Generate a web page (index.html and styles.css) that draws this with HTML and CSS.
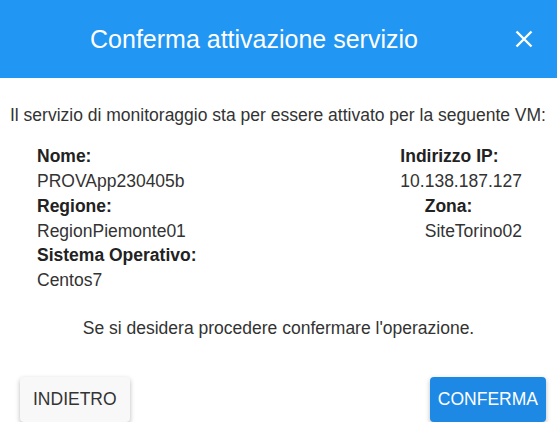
FILE: index.html
```html
<!DOCTYPE html>
<html lang="it">
<head>
<meta charset="utf-8">
<title>Conferma attivazione servizio</title>
<link rel="stylesheet" href="styles.css">
</head>
<body>
<div class="dialog">
  <div class="header">
    <h1 class="title">Conferma attivazione servizio</h1>
    <button class="close" aria-label="Chiudi">
      <svg width="18" height="18" viewBox="0 0 18 18"><path d="M1.5 1.5 L16.5 16.5 M16.5 1.5 L1.5 16.5" stroke="#fff" stroke-width="2.4" fill="none"/></svg>
    </button>
  </div>
  <div class="content">
    <p class="intro">Il servizio di monitoraggio sta per essere attivato per la seguente VM:</p>
    <div class="details">
      <div class="col-left">
        <div class="pair"><div class="label">Nome:</div><div class="value">PROVApp230405b</div></div>
        <div class="pair"><div class="label">Regione:</div><div class="value">RegionPiemonte01</div></div>
        <div class="pair"><div class="label">Sistema Operativo:</div><div class="value">Centos7</div></div>
      </div>
      <div class="col-right">
        <div class="pair"><div class="label">Indirizzo IP:</div><div class="value">10.138.187.127</div></div>
        <div class="pair"><div class="label">Zona:</div><div class="value">SiteTorino02</div></div>
      </div>
    </div>
    <p class="confirm">Se si desidera procedere confermare l'operazione.</p>
  </div>
  <div class="actions">
    <button class="btn btn-back">INDIETRO</button>
    <button class="btn btn-ok">CONFERMA</button>
  </div>
</div>
</body>
</html>
```

FILE: styles.css
```css
html, body {
  margin: 0;
  padding: 0;
  background: #fff;
}
body {
  font-family: "Liberation Sans", Arial, sans-serif;
  color: #333;
  font-size: 17.5px;
}
.header {
  height: 78px;
  background: #2196f3;
  display: flex;
  align-items: center;
  padding-right: 18px;
}
.title {
  flex: 1;
  margin: 0;
  text-align: center;
  font-size: 25px;
  font-weight: normal;
  color: #fff;
  line-height: 30px;
}
.close {
  width: 31px;
  height: 31px;
  padding: 0;
  border: 0;
  background: transparent;
  display: flex;
  align-items: center;
  justify-content: center;
}
.content {
  padding: 25px 0 0 10px;
}
.intro {
  margin: 0;
  line-height: 25px;
  white-space: nowrap;
}
.details {
  display: flex;
  justify-content: space-between;
  padding: 16px 35px 0 27px;
  line-height: 24.85px;
}
.col-right {
  display: flex;
  flex-direction: column;
  align-items: flex-end;
}
.label {
  font-weight: bold;
  color: #222;
}
.confirm {
  margin: 23px 0 0;
  line-height: 25px;
  text-align: center;
  padding-right: 10px;
}
.actions {
  display: flex;
  justify-content: space-between;
  padding: 36px 11px 0 20px;
}
.btn {
  font-family: "Liberation Sans", Arial, sans-serif;
  font-size: 17.5px;
  height: 45px;
  border: 0;
  border-radius: 4px;
  box-shadow: 0 2px 5px rgba(0, 0, 0, 0.28);
}
.btn-back {
  background: #f8f8f8;
  color: #333;
  padding: 0 13px;
}
.btn-ok {
  background: #1e88e5;
  color: #fff;
  padding: 0 8px;
}
```
